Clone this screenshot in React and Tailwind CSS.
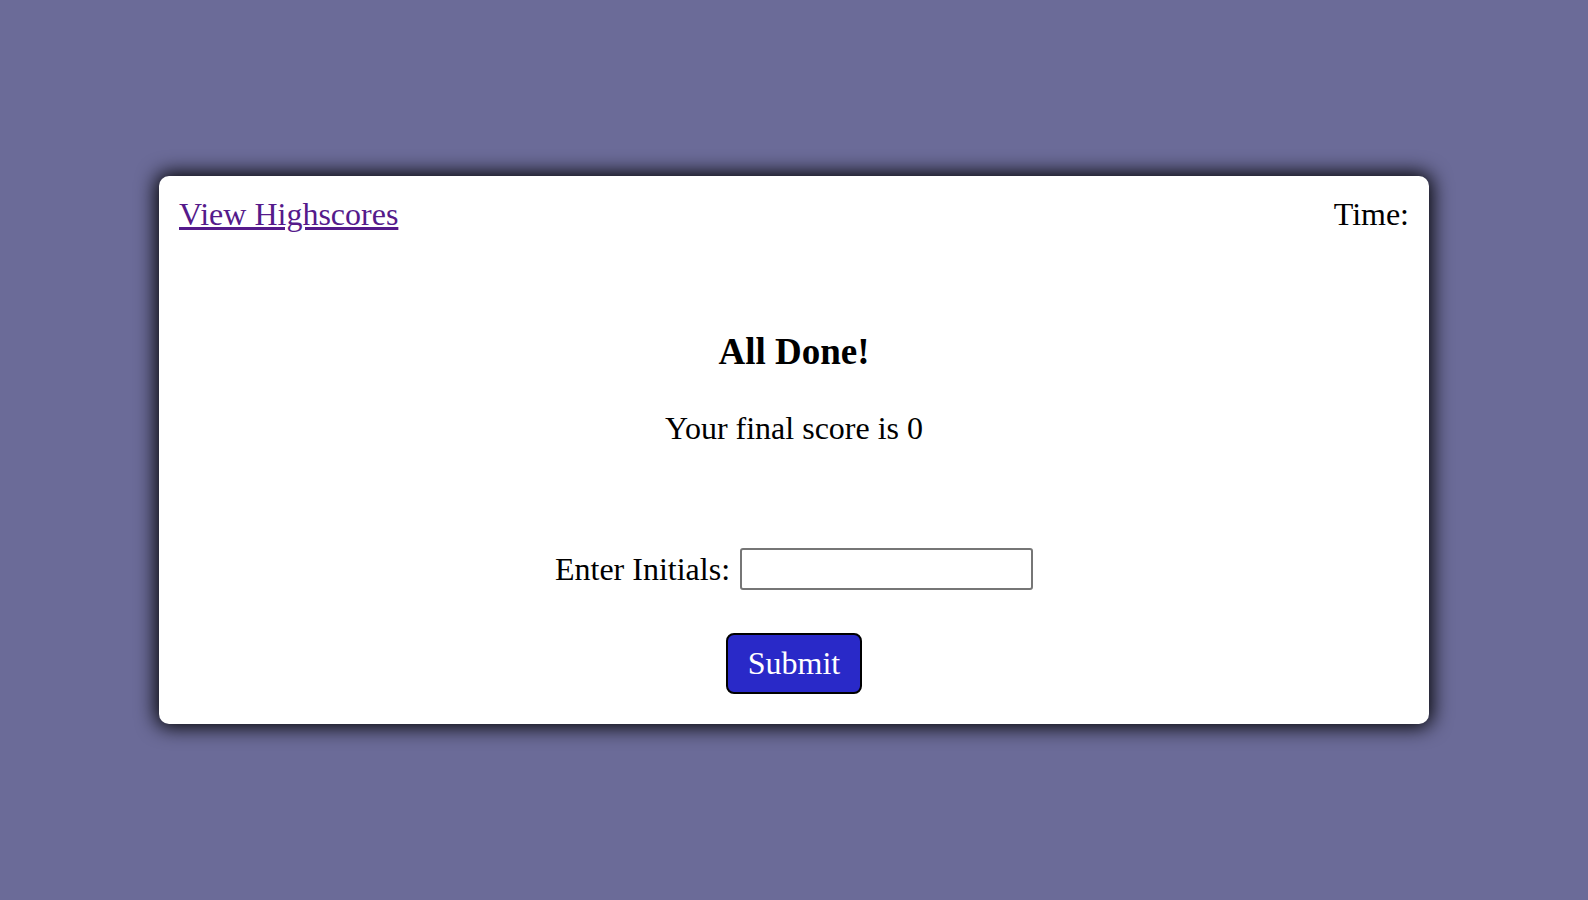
import React, { useState } from 'react';

const App = () => {
  const [initials, setInitials] = useState("");

  return (
    <div className="min-h-screen w-full bg-[#6b6b98] flex justify-center pt-[176px] font-['Liberation_Serif','Times_New_Roman',serif] text-black">
      <div className="w-[1270px] h-fit bg-white rounded-[10px] shadow-[0_0_20px_3px_rgba(0,0,0,1)] flex flex-col items-center pb-[30px]">
        {/* Header */}
        <div className="w-full flex justify-between px-[20px] pt-[20px] text-[32px] leading-[37px]">
          <a href="#" className="text-[#551a8b] underline">View Highscores</a>
          <span>Time:</span>
        </div>

        <h2 className="mt-[98px] text-[37px] leading-[42px] font-bold">All Done!</h2>
        <p className="mt-[37px] text-[32px] leading-[37px]">Your final score is 0</p>

        {/* Initials */}
        <div className="mt-[101px] flex items-center h-[42px] text-[32px] leading-[37px]">
          <label htmlFor="initials" className="mr-[10px]">Enter Initials:</label>
          <input
            id="initials"
            type="text"
            value={initials}
            onChange={(e) => setInitials(e.target.value)}
            className="w-[293px] h-[42px] border-2 border-[#767676] rounded-[3px] bg-white px-2 text-[20px] outline-none"
          />
        </div>

        <button className="mt-[43px] w-[136px] h-[61px] bg-[#2929c8] text-white border-2 border-black rounded-[8px] text-[32px] leading-[37px]">
          Submit
        </button>
      </div>
    </div>
  );
};

export default App;
